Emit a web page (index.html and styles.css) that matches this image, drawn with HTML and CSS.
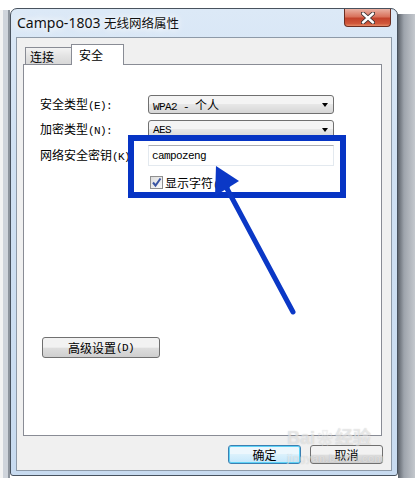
FILE: index.html
```html
<!DOCTYPE html>
<html lang="zh-CN">
<head>
    <meta charset="UTF-8">
    <title>Campo-1803 无线网络属性</title>
    <link rel="stylesheet" href="styles.css">
</head>
<body>
    <div class="window">
        <div class="titlebar">
            <span class="title">Campo-1803 <span class="title-cjk">无线网络属性</span></span>
            <div class="close">
                <svg width="14" height="12" viewBox="0 0 14 12">
                    <path d="M2 1.5 L12 10.5 M12 1.5 L2 10.5" stroke="#3b3030" stroke-width="4.2" stroke-linecap="round"/>
                    <path d="M2 1.5 L12 10.5 M12 1.5 L2 10.5" stroke="#ffffff" stroke-width="2.4" stroke-linecap="round"/>
                </svg>
            </div>
        </div>

        <div class="client">
            <div class="tabs">
                <div class="tab">连接</div>
                <div class="tab active">安全</div>
            </div>

            <div class="panel">
                <div class="form">
                    <div class="label">安全类型<span class="lat">(E):</span></div>
                    <div class="select"><span><span class="lat">WPA2 - </span>个人</span><i class="caret"></i></div>

                    <div class="label">加密类型<span class="lat">(N):</span></div>
                    <div class="select"><span class="lat">AES</span><i class="caret"></i></div>

                    <div class="label">网络安全密钥<span class="lat">(K)</span></div>
                    <div class="input"><span class="lat">campozeng</span></div>

                    <div></div>
                    <div class="check">
                        <span class="box">
                            <svg width="11" height="11" viewBox="0 0 11 11">
                                <path d="M2 5.5 L4.5 8.5 L9.5 1.5" fill="none" stroke="#3a55a3" stroke-width="2"/>
                            </svg>
                        </span>
                        <span>显示字符<span class="lat">(H)</span></span>
                    </div>
                </div>

                <div class="btn adv">高级设置<span class="lat">(D)</span></div>
            </div>

            <div class="footer">
                <div class="btn default">确定</div>
                <div class="btn">取消</div>
            </div>
        </div>
    </div>

    <!-- annotation drawn over the dialog -->
    <div class="highlight"></div>
    <svg class="arrow" width="415" height="493" viewBox="0 0 415 493">
        <line x1="293" y1="312" x2="224" y2="183" stroke="#0b38c6" stroke-width="5" stroke-linecap="round"/>
        <polygon points="216,166 239,181 215,196" fill="#0b38c6"/>
    </svg>

    <div class="watermark">
        <div class="wm-big">Bai<span class="paw">❀</span>经验</div>
        <div class="wm-small">jingyan.baidu.com</div>
    </div>
</body>
</html>
```

FILE: styles.css
```css
body {
    margin: 0;
    width: 415px;
    height: 493px;
    box-sizing: border-box;
    padding: 8px 0 0 10px;
    overflow: hidden;
    position: relative;
    font-family: "Noto Sans CJK SC", sans-serif;
    font-size: 12px;
    color: #000;
    background:
        linear-gradient(90deg, #f3f3f3 0 3px, #cfd4db 3px 8px, #8c939c 8px 10px) 0 10px / 10px 468px no-repeat,
        linear-gradient(90deg, #5e646c, #9ea4ac 6px, #c4c8cd 17px) 398px 14px / 17px 464px no-repeat,
        #fff;
}
.lat {
    font-family: "Liberation Mono", monospace;
    font-size: 11px;
    letter-spacing: -0.6px;
}

/* window frame */
.window {
    width: 388px;
    height: 468px;
    box-sizing: border-box;
    border: 1px solid #48525e;
    border-radius: 7px 7px 3px 3px;
    background: linear-gradient(180deg, #dce9f7, #d0e1f3 30%, #c8dbf0);
    padding: 0 5px 4px;
    display: flex;
    flex-direction: column;
}
.titlebar {
    height: 28px;
    display: flex;
    justify-content: space-between;
    align-items: flex-start;
}
.title {
    font-family: "Noto Sans", "Noto Sans CJK SC", sans-serif;
    font-size: 14px;
    line-height: 28px;
    padding-left: 1px;
    color: #111;
    text-shadow: 0 0 6px #fff, 0 0 10px #fff;
}
.title-cjk {
    font-size: 12.5px;
}
.close {
    width: 47px;
    height: 18px;
    box-sizing: border-box;
    margin-right: 1px;
    border: 1px solid #6b2e22;
    border-top: none;
    border-radius: 0 0 4px 4px;
    background: linear-gradient(180deg, #eab1a3, #d9725c 45%, #c3432c 55%, #d0573b 85%, #e58a66);
    display: flex;
    align-items: center;
    justify-content: center;
}

/* client area */
.client {
    flex: 1;
    background: #f0f0f0;
    border: 1px solid #8e9aa8;
    padding: 6px 0 0 6px;
    display: flex;
    flex-direction: column;
}
.tabs {
    display: flex;
    align-items: flex-end;
    height: 21px;
    margin: 0 0 -1px 2px;
    position: relative;
    z-index: 1;
}
.tab {
    height: 18px;
    width: 47px;
    box-sizing: border-box;
    border: 1px solid #898c95;
    background: linear-gradient(#f3f3f3, #e3e3e3 50%, #d8d8d8);
    padding-left: 4px;
    line-height: 17px;
}
.tab.active {
    height: 21px;
    width: 53px;
    margin-left: -1px;
    border-bottom: none;
    background: #fff;
    padding-left: 7px;
    line-height: 20px;
}
.panel {
    width: 359px;
    height: 372px;
    box-sizing: border-box;
    border: 1px solid #898c95;
    background: #fff;
    padding: 30px 0 0 16px;
}
.form {
    display: grid;
    grid-template-columns: 108px 186px;
    grid-template-rows: 19px 19px 21px 20px;
    row-gap: 6px;
    align-items: center;
}
.label {
    white-space: nowrap;
    line-height: 19px;
}
.select {
    height: 19px;
    box-sizing: border-box;
    border: 1px solid #707070;
    border-radius: 3px;
    background: linear-gradient(#f4f4f4 0 45%, #e7e7e7 50%, #d6d6d6);
    padding: 0 5px 0 4px;
    display: flex;
    align-items: center;
    justify-content: space-between;
}
.caret {
    width: 0;
    height: 0;
    border-top: 4px solid #000;
    border-left: 3.5px solid transparent;
    border-right: 3.5px solid transparent;
}
.input {
    height: 21px;
    box-sizing: border-box;
    border: 1px solid #e3e9ef;
    border-top-color: #abadb3;
    padding-left: 3px;
    display: flex;
    align-items: center;
}
.check {
    display: flex;
    align-items: center;
    gap: 2px;
    margin-left: 2px;
}
.box {
    width: 13px;
    height: 13px;
    box-sizing: border-box;
    border: 1px solid #8f8f8f;
    background: linear-gradient(135deg, #dcdcdc, #fbfbfb);
    display: flex;
    align-items: center;
    justify-content: center;
}

/* buttons */
.btn {
    width: 73px;
    height: 19px;
    box-sizing: border-box;
    border: 1px solid #707070;
    border-radius: 3px;
    background: linear-gradient(#f2f2f2 0 45%, #ebebeb 50%, #dddddd 55%, #cfcfcf);
    display: flex;
    align-items: center;
    justify-content: center;
}
.btn.adv {
    width: 118px;
    height: 21px;
    margin: 145px 0 0 2px;
}
.btn.default {
    border-color: #3c7fb1;
    box-shadow: inset 0 0 0 1px #5fd3f7;
    background: linear-gradient(#ecf7fd 0 45%, #dbf1fc 50%, #c4e7fb);
}
.footer {
    display: flex;
    justify-content: flex-end;
    gap: 9px;
    padding: 9px 8px 0 0;
}

/* annotation */
.highlight {
    position: absolute;
    left: 128px;
    top: 135px;
    width: 218px;
    height: 63px;
    box-sizing: border-box;
    border: 6px solid #0634c4;
}
.arrow {
    position: absolute;
    left: 0;
    top: 0;
    pointer-events: none;
}
.watermark {
    position: absolute;
    left: 287px;
    top: 428px;
    color: rgba(255, 255, 255, 0.5);
    text-shadow: 0 0 1px rgba(140, 140, 140, 0.45);
    font-family: "Liberation Sans", "Noto Sans CJK SC", sans-serif;
    pointer-events: none;
}
.wm-big {
    font-size: 18px;
    font-weight: bold;
    line-height: 20px;
}
.paw {
    font-size: 16px;
    margin: 0 2px;
}
.wm-small {
    font-size: 11px;
    line-height: 12px;
    margin-top: 3px;
    letter-spacing: 0.5px;
}
```
